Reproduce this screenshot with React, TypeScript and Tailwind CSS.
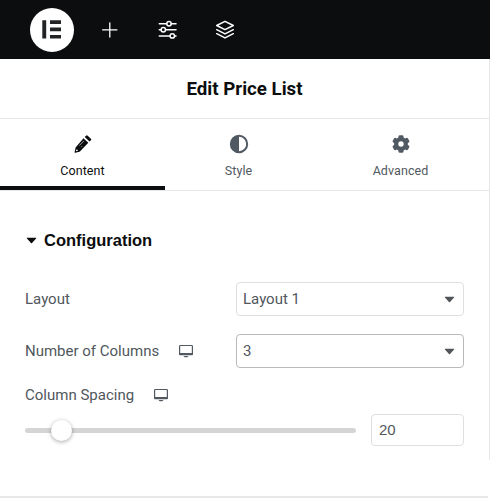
import type { ReactNode } from 'react';

function Caret({ className }: { className: string }) {
  return (
    <svg className={className} width="11" height="7" viewBox="0 0 12 7" preserveAspectRatio="none" fill="currentColor">
      <path d="M1.200.8h9.600q.8 0 .2.700L6.600 5.900q-.6.6-1.200 0L1 1.500Q.4.800 1.200.8Z" />
    </svg>
  );
}

function Monitor() {
  return (
    <svg width="16" height="14" viewBox="0 0 16 14" fill="none">
      <rect x="1.600" y="1.500" width="12.800" height="9" rx=".8" stroke="#515962" strokeWidth="1.200" />
      <path d="M1 8.900h14v1.100q0 1.200-1.200 1.200H2.200Q1 11.200 1 10Z" fill="#515962" />
      <path d="M5.500 12h5l-1.200 1.300H6.700Z" fill="#515962" />
    </svg>
  );
}

function Tab({ label, active, width, children }: { label: string; active?: boolean; width: string; children: ReactNode }) {
  return (
    <button
      className={`${width} flex h-[72px] flex-col items-center border-b border-[#e6e8ea] pt-[15px] ${
        active ? 'text-[#0c0d0e]' : 'text-[#515962]'
      }`}
    >
      <span className="flex h-5 items-center">{children}</span>
      <span className="mt-2 h-[18px] text-[12.500px] leading-[18px] tracking-[0.08px]">{label}</span>
      {active && <span className="mt-1.5 h-1 w-full shrink-0 bg-[#0c0d0e]" />}
    </button>
  );
}

function Select({ value, focused }: { value: string; focused?: boolean }) {
  return (
    <div
      className={`flex h-[34px] w-[228px] items-center justify-between rounded-[4px] border pl-[6px] pr-[8px] ${
        focused ? 'border-[#b8babd]' : 'border-[#dddfe1]'
      }`}
    >
      <span>{value}</span>
      <Caret className="text-[#515559]" />
    </div>
  );
}

export default function App() {
  return (
    <div className="h-[498px] w-[490px] overflow-hidden bg-white font-[Roboto,sans-serif] text-[15px] text-[#51575d]">
      <header className="flex h-[59px] items-center bg-[#0c0d0e] pl-[30px]">
        <svg width="44" height="44" viewBox="0 0 44 44">
          <circle cx="22" cy="22" r="22" fill="#fff" />
          <path d="M12.300 12.300h3.900v18.200h-3.900zM20 12.300h11v3.600H20zM20 19.600h11v3.600H20zM20 26.900h11v3.600H20z" fill="#222426" />
        </svg>
        <svg className="ml-[28px]" width="16" height="16" viewBox="0 0 16 16" stroke="#fff" strokeWidth="1.300" strokeLinecap="round">
          <path d="M7.800 .8v14.200M.7 7.900h14.200" />
        </svg>
        <svg className="ml-[39px]" width="20" height="20" viewBox="0 0 20 20" fill="none" stroke="#fff" strokeWidth="1.500" strokeLinecap="round">
          <path d="M2.300 3.700h7.200M14.300 3.700h4.700M2.300 9.800h2M8.600 9.800H19M2.300 15.900h10.500M17.600 15.900H19" />
          <circle cx="12" cy="3.700" r="2.200" />
          <circle cx="6.300" cy="9.800" r="2.200" />
          <circle cx="15.300" cy="15.900" r="2.200" />
        </svg>
        <svg className="ml-[38px]" width="20" height="20" viewBox="0 0 20 20" fill="none" stroke="#fff" strokeWidth="1.500" strokeLinecap="round" strokeLinejoin="round">
          <path d="m10 1.300 8.300 4.200L10 9.700 1.700 5.500ZM1.700 9.700l8.300 4.200 8.300-4.200M1.700 13.700l8.300 4.200 8.300-4.200" />
        </svg>
      </header>

      <main className="h-[401px] w-[490px] border-r border-[#e6e8ea]">
        <h1 className="flex h-[60px] items-center justify-center border-b border-[#e6e8ea] pt-px text-[18.700px] font-bold text-[#0c0d0e]">
          Edit Price List
        </h1>
        <nav className="flex">
          <Tab label="Content" active width="w-[165px]">
            <svg width="18" height="18" viewBox="0 0 18 18">
              <path d="m9.500 3.200 4.800 4.600-7.900 8.300q-.4.500-1 .7l-4.100 1q-.8.100-.7-.7l.9-4.200q.1-.5.5-.9ZM10.700 2l1.400-1.300q.8-.8 1.600 0l3.200 3q.8.800 0 1.600L15.500 6.600Z" fill="currentColor" />
              <path d="m5.300 10.600 4.600-4.700M7.100 12.200l1-1" stroke="#fff" strokeWidth=".6" />
              <path d="m2.300 14.300-.4 1.900 1.900-.5v-.9H2.700Z" fill="#fff" />
            </svg>
          </Tab>
          <Tab label="Style" width="w-[147px]">
            <svg width="20" height="20" viewBox="0 0 20 20">
              <circle cx="10" cy="10" r="8.200" fill="none" stroke="currentColor" strokeWidth="2" />
              <path d="M10 2a8 8 0 0 0 0 16Z" fill="currentColor" />
            </svg>
          </Tab>
          <Tab label="Advanced" width="w-[177px]">
            <svg width="18" height="18" viewBox="0 0 18 18">
              <g fill="currentColor">
                <circle cx="9" cy="9" r="6.900" />
                <rect x="6.500" y=".2" width="5" height="17.600" rx="1.300" />
                <rect x="6.500" y=".2" width="5" height="17.600" rx="1.300" transform="rotate(60 9 9)" />
                <rect x="6.500" y=".2" width="5" height="17.600" rx="1.300" transform="rotate(120 9 9)" />
              </g>
              <circle cx="9" cy="9" r="2.700" fill="#fff" />
            </svg>
          </Tab>
        </nav>

        <section className="pl-[25px]">
          <h2 className="flex h-[91px] items-center pt-[7px] font-['Liberation_Sans',Arial,sans-serif] text-[16.500px] font-bold text-[#0c0d0e]">
            <Caret className="ml-px mr-[7px]" />
            Configuration
          </h2>
          <div className="flex h-[34px] items-center">
            <span className="w-[211px]">Layout</span>
            <Select value="Layout 1" />
          </div>
          <div className="mt-[18px] flex h-[34px] items-center">
            <span className="flex w-[211px] items-center">
              <span className="mr-[19px]">Number of Columns</span>
              <Monitor />
            </span>
            <Select value="3" focused />
          </div>
          <div className="mt-[17px] flex h-5 items-center">
            <span className="mr-[19px]">Column Spacing</span>
            <Monitor />
          </div>
          <div className="mt-[9px] flex h-8 items-center">
            <div className="flex h-[5px] w-[331px] items-center rounded-[3px] bg-[#d5d5d6] pl-[26px]">
              <div className="size-[21px] rounded-full bg-white shadow-[0_1px_4px_rgba(0,0,0,0.35)]" />
            </div>
            <div className="ml-[15px] flex h-8 w-[93px] items-center rounded-[4px] border border-[#dddfe1] pl-[7px] font-['Liberation_Sans',Arial,sans-serif]">
              20
            </div>
          </div>
        </section>
      </main>
      <footer className="mt-[36px] h-[2px] w-[488px] bg-[#e8e8e8]" />
    </div>
  );
}
